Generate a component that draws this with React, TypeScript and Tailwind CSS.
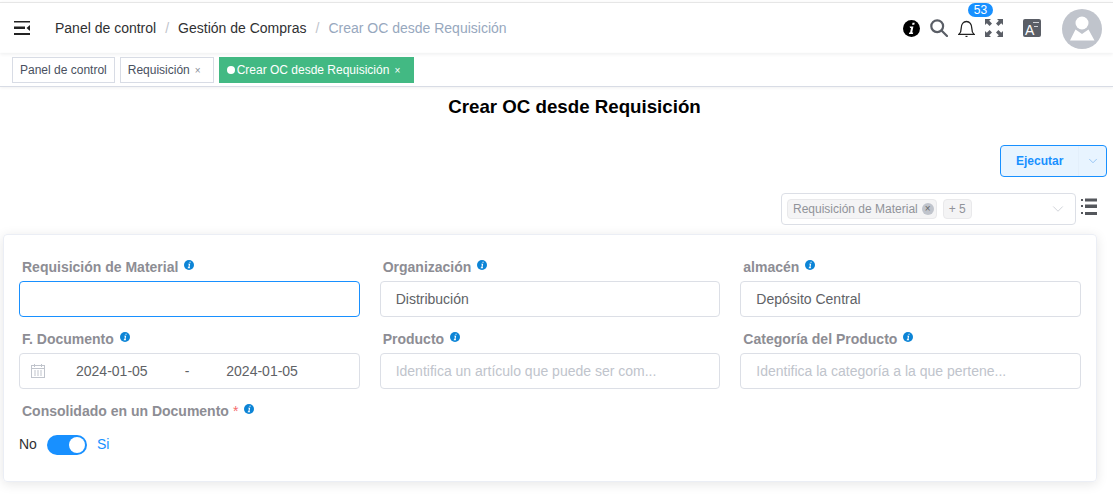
import { ChevronDown } from "lucide-react";

function InfoDot() {
  return (
    <svg width="10" height="10" viewBox="0 0 10 10" className="shrink-0">
      <circle cx="5" cy="5" r="5" fill="#0c84d6" />
      <path d="M5.600 1.700h1.100l-.2 1H5.400zM4.100 3.700h2.100L5.500 7.300h.6l-.2.900H3.700l.2-.9h.5l.5-2.700h-.5z" fill="#fff" />
    </svg>
  );
}

function FieldLabel({ text, required }: { text: string; required?: boolean }) {
  return (
    <div className="flex h-[28px] items-start pl-[3px] pt-[3px]">
      <span className="mt-[2px] text-[14px] leading-[18px] font-bold text-[#8d8d94]">{text}</span>
      {required && <span className="mt-[2px] ml-[4px] text-[14px] leading-[18px] text-[#f56c6c]">*</span>}
      <span className="mt-[4px] ml-[6px]">
        <InfoDot />
      </span>
    </div>
  );
}

function TextField({ label, value, placeholder }: { label: string; value?: string; placeholder?: string }) {
  return (
    <div>
      <FieldLabel text={label} />
      <div className="flex h-[36px] items-center rounded-[4px] border border-[#dcdfe6] px-[15px] text-[14px]">
        {value ? <span className="text-[#606266]">{value}</span> : <span className="text-[#c0c4cc]">{placeholder}</span>}
      </div>
    </div>
  );
}

function Header() {
  return (
    <header className="mt-[2px] flex h-[51px] items-center border-t border-[#e6e6e6] shadow-[0_1px_4px_rgba(0,21,41,0.08)]">
      <svg width="16" height="14" viewBox="0 0 16 14" className="ml-[14px]" fill="#222">
        <rect x="0" y="0" width="16" height="1.500" />
        <rect x="0" y="5.500" width="11" height="2.500" />
        <rect x="0" y="12" width="16" height="2" />
        <path d="M16 4v6l-3.500-3z" />
      </svg>
      <nav className="ml-[25px] flex items-center text-[14px] text-[#303133]">
        <span>Panel de control</span>
        <span className="mx-[9px] text-[#c0c4cc]">/</span>
        <span>Gestión de Compras</span>
        <span className="mx-[9px] text-[#c0c4cc]">/</span>
        <span className="text-[#97a8be]">Crear OC desde Requisición</span>
      </nav>
      <div className="ml-auto flex items-center">
        <svg width="17" height="17" viewBox="0 0 17 17">
          <circle cx="8.500" cy="8.500" r="8.500" fill="#000" />
          <path d="M9.500 2.800h2.200l-.4 2H9.100zM6.600 6.400h3.800l-1.200 6h1l-.3 1.700H5.900l.3-1.700h.9l.9-4.300h-.9z" fill="#fff" />
        </svg>
        <svg width="18" height="18" viewBox="0 0 18 18" className="ml-[10px]" fill="none" stroke="#5a5e66" strokeWidth="2.200">
          <circle cx="7.200" cy="7.200" r="5.900" />
          <path d="M11.500 11.500l5.500 5.500" strokeLinecap="round" />
        </svg>
        <div className="relative ml-[10px] h-[17px] w-[17px]">
          <svg width="17" height="17" viewBox="0 0 17 17" fill="none" stroke="#222" strokeWidth="1.300">
            <path d="M1 14.300c1.700-1.400 2.200-2.800 2.200-6C3.200 4 5.400 1.500 8.500 1.500s5.300 2.500 5.300 6.800c0 3.200.5 4.600 2.200 6z" />
            <path d="M7.500 16.500h2" />
          </svg>
          <span className="absolute top-[-17px] left-[10px] flex h-[14px] w-[25px] items-center justify-center rounded-full bg-[#1890ff] text-[12px] leading-none text-white">
            53
          </span>
        </div>
        <svg width="18" height="18" viewBox="0 0 18 18" className="ml-[10px]" fill="#5a5e66">
          <path d="M0 0h6L4.200 1.800 7 4.600 4.600 7 1.800 4.200 0 6zM18 0v6l-1.800-1.800L13.400 7 11 4.600l2.800-2.800L12 0zM0 18v-6l1.800 1.800L4.600 11 7 13.400l-2.800 2.800L6 18zM18 18h-6l1.800-1.800L11 13.400l2.400-2.400 2.800 2.800L18 12z" />
        </svg>
        <span className="relative ml-[20px] flex h-[18px] w-[18px] items-center justify-start rounded-[2px] bg-[#5a5e66] pl-[2px]">
          <span className="mt-[3px] text-[14px] leading-none text-white">A</span>
          <span className="absolute top-[3px] right-[2px] h-[1px] w-[6px] bg-[#d0d2d6]" />
          <span className="absolute top-[5px] right-[3px] h-[3px] w-[4px] border-b border-[#d0d2d6]" />
        </span>
        <div className="relative mr-[11px] ml-[21px] mt-[2px] h-[40px] w-[40px] overflow-hidden rounded-full bg-[#c0c4cc]">
          <svg width="40" height="40" viewBox="0 0 40 40" fill="#fff">
            <circle cx="20" cy="14" r="6.500" />
            <path d="M13.500 20.500l6.500 4.500 6.500-4.500 6 11H8z" />
          </svg>
        </div>
      </div>
    </header>
  );
}

function TagsBar() {
  return (
    <div className="flex h-[34px] items-start gap-[5px] border-b border-[#d8dce5] pl-[12px] pt-[4px] text-[12px] shadow-[0_1px_3px_rgba(0,0,0,0.06)]">
      <div className="flex h-[26px] items-center border border-[#d8dce5] px-[7px] text-[#495060]">Panel de control</div>
      <div className="flex h-[26px] items-center border border-[#d8dce5] pr-[12px] pl-[7px] text-[#495060]">
        Requisición
        <span className="ml-[5px] text-[10px] text-[#8a8f99]">×</span>
      </div>
      <div className="flex h-[26px] items-center bg-[#42b983] pr-[14px] pl-[8px] text-white">
        <span className="mr-[2px] h-[8px] w-[8px] rounded-full bg-white" />
        Crear OC desde Requisición
        <span className="ml-[5px] text-[10px]">×</span>
      </div>
    </div>
  );
}

function Toolbar() {
  return (
    <div className="flex flex-col items-end">
      <div className="mr-[6px] mt-[28px] flex h-[32px] w-[107px] items-center rounded-[4px] border border-[#1890ff] bg-[#e8f4ff] text-[12px] font-bold text-[#1890ff]">
        <span className="flex-1 pl-[15px]">Ejecutar</span>
        <span className="flex h-full w-[28px] items-center justify-center border-l border-[#e3effb]">
          <ChevronDown size={14} strokeWidth={1.3} className="text-[#7eb6f0]" />
        </span>
      </div>
      <div className="mr-[16px] mt-[16px] flex items-center gap-[5px]">
        <div className="flex h-[32px] w-[295px] items-center rounded-[4px] border border-[#dcdfe6] pl-[5px] pr-[8px] text-[12px] text-[#909399]">
          <span className="flex h-[20px] items-center rounded-[4px] border border-[#e9e9eb] bg-[#f4f4f5] pl-[5px] pr-[2px]">
            Requisición de Material
            <span className="ml-[4px] flex h-[12px] w-[12px] items-center justify-center rounded-full bg-[#c0c4cc] text-[10px] leading-none text-[#666]">×</span>
          </span>
          <span className="ml-[6px] flex h-[20px] items-center rounded-[4px] border border-[#e9e9eb] bg-[#f4f4f5] px-[5px]">+ 5</span>
          <ChevronDown size={18} strokeWidth={1} className="ml-auto text-[#c0c4cc]" />
        </div>
        <svg width="16" height="17" viewBox="0 0 16 17" fill="#54575c" className="-mt-[5px]">
          <rect x="0" y="1" width="2" height="2" />
          <rect x="4" y="0.500" width="12" height="3" />
          <rect x="0" y="7" width="2" height="2" />
          <rect x="4" y="6.500" width="12" height="3.500" />
          <rect x="0" y="14" width="2" height="2" />
          <rect x="4" y="14" width="12" height="3" />
        </svg>
      </div>
    </div>
  );
}

function FormCard() {
  return (
    <section className="mt-[9px] mr-[16px] ml-[3px] h-[248px] rounded-[4px] border border-[#ebeef5] px-[15px] pt-[18px] shadow-[0_2px_12px_rgba(0,0,0,0.1)]">
      <div className="grid grid-cols-3 gap-x-[20px] gap-y-[8px]">
        <div>
          <FieldLabel text="Requisición de Material" />
          <div className="h-[36px] rounded-[4px] border border-[#1890ff]" />
        </div>
        <TextField label="Organización" value="Distribución" />
        <TextField label="almacén" value="Depósito Central" />
        <div>
          <FieldLabel text="F. Documento" />
          <div className="flex h-[36px] items-center rounded-[4px] border border-[#dcdfe6] pl-[11px] text-[14px] text-[#606266]">
            <svg width="14" height="14" viewBox="0 0 14 14" fill="none" stroke="#c0c4cc" strokeWidth="1">
              <rect x="0.500" y="1.500" width="13" height="12" />
              <path d="M0.500 4.500h13M3.500 0v3M10.500 0v3" />
              <path d="M3 7h8M3 9h8M3 11h8" strokeDasharray="2 1" />
            </svg>
            <span className="ml-[31px]">2024-01-05</span>
            <span className="ml-[37px]">-</span>
            <span className="ml-[37px]">2024-01-05</span>
          </div>
        </div>
        <TextField label="Producto" placeholder="Identifica un artículo que puede ser com..." />
        <TextField label="Categoría del Producto" placeholder="Identifica la categoría a la que pertene..." />
      </div>
      <div className="mt-[8px]">
        <FieldLabel text="Consolidado en un Documento" required />
        <div className="mt-[9px] flex items-center text-[14px]">
          <span className="text-[#303133]">No</span>
          <span className="ml-[10px] flex h-[20px] w-[40px] items-center justify-end rounded-full bg-[#1890ff] pr-[2px]">
            <span className="h-[16px] w-[16px] rounded-full bg-white" />
          </span>
          <span className="ml-[10px] text-[#1890ff]">Si</span>
        </div>
      </div>
    </section>
  );
}

export default function App() {
  return (
    <div className="h-[502px] overflow-hidden bg-white font-['Liberation_Sans',Arial,sans-serif]">
      <Header />
      <TagsBar />
      <h1 className="mt-[9px] pl-[36px] text-center text-[18.720px] leading-[21px] font-bold text-black">Crear OC desde Requisición</h1>
      <Toolbar />
      <FormCard />
    </div>
  );
}
